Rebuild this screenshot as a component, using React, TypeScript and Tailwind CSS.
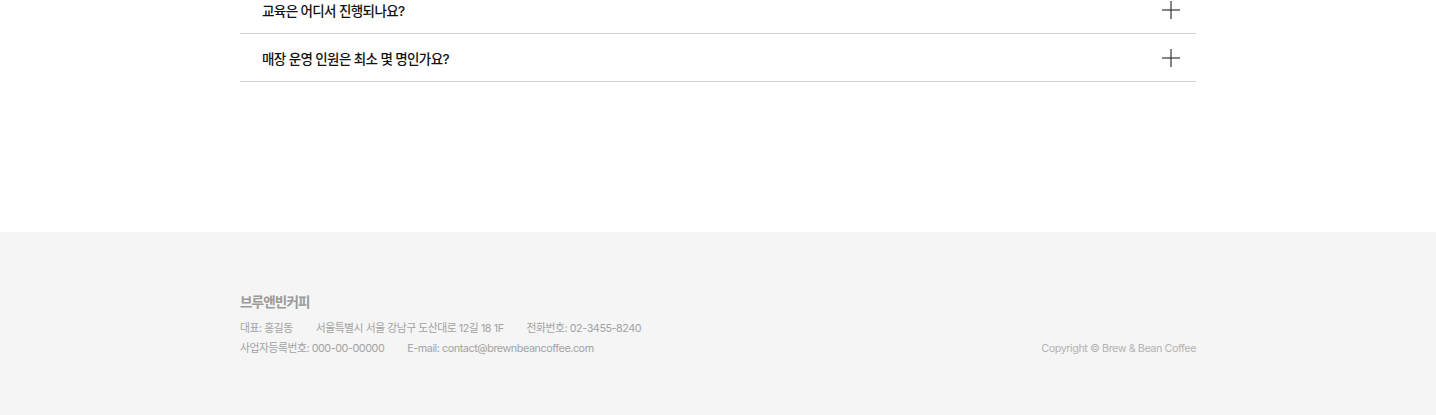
import React from "react";

const font = { fontFamily: '"Inter", "Noto Sans CJK KR", "Noto Sans", sans-serif' };

function Plus() {
  return (
    <svg width="18" height="18" viewBox="0 0 18 18" fill="none" stroke="#333" strokeWidth="1.2">
      <line x1="0" y1="9" x2="18" y2="9" />
      <line x1="9" y1="0" x2="9" y2="18" />
    </svg>
  );
}

function Row({ q }: { q: string }) {
  return (
    <div className="flex h-[48px] items-center justify-between border-b border-[#d4d4d4] pl-[22px] pr-[16px]">
      <span className="pt-[4px] text-[13.5px] font-medium tracking-[-0.6px] text-[#111]">{q}</span>
      <Plus />
    </div>
  );
}

export default function App() {
  return (
    <div style={font} className="w-full min-h-[415px] bg-white overflow-hidden">
      <div className="mx-auto w-[956px] -mt-[14px]">
        <Row q="교육은 어디서 진행되나요?" />
        <Row q="매장 운영 인원은 최소 몇 명인가요?" />
      </div>
      <div className="h-[150px]" />
      <footer className="bg-[#f5f5f5] h-[183px] pt-[60px]">
        <div className="mx-auto w-[956px]">
          <div className="text-[13.5px] font-bold tracking-[-0.8px] text-[#9a9a9a] leading-[20px]">브루앤빈커피</div>
          <div className="mt-[7px] flex items-end justify-between text-[10.8px] tracking-[-0.45px] text-[#a3a3a3] leading-[20px]">
            <div className="flex flex-col">
              <div className="flex gap-[23px]">
                <span>대표: 홍길동</span>
                <span>서울특별시 서울 강남구 도산대로 12길 18 1F</span>
                <span>전화번호: 02-3455-8240</span>
              </div>
              <div className="flex gap-[23px]">
                <span>사업자등록번호: 000-00-00000</span>
                <span>E-mail: contact@brewnbeancoffee.com</span>
              </div>
            </div>
            <span className="text-[#b3b3b3]">Copyright © Brew &amp; Bean Coffee</span>
          </div>
        </div>
      </footer>
    </div>
  );
}
